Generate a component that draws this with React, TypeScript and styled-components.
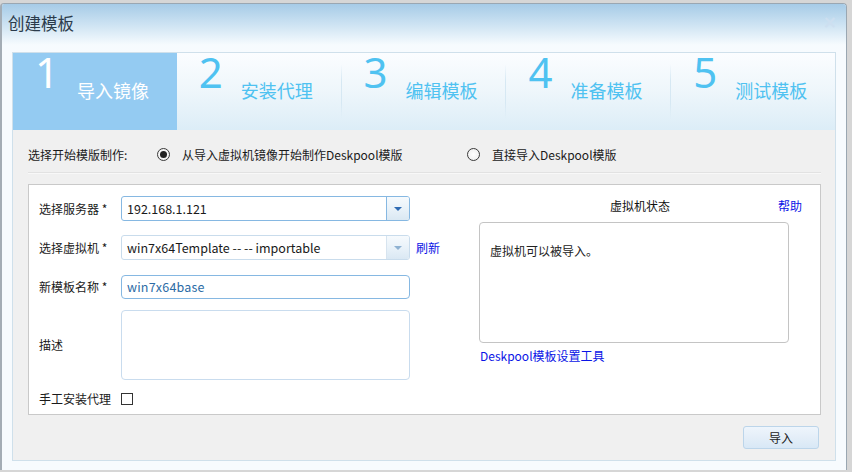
import React from "react";
import styled, { createGlobalStyle } from "styled-components";

const Global = createGlobalStyle`
  html, body { margin: 0; padding: 0; }
  body {
    background: #d6d6d6;
    font-family: "Noto Sans CJK SC", "Noto Sans", sans-serif;
    font-size: 12px;
    color: #1a1a1a;
    width: 852px;
    height: 472px;
    overflow: hidden;
  }
`;

const Window = styled.div`
  margin: 3px 3px 0 0;
  width: 847px;
  height: 467px;
  border: 1px solid #9aa7b2;
  border-left: 2px solid #a4adb5;
  border-bottom: none;
  border-radius: 4px 4px 0 0;
  background: #f7fbfe;
  display: flex;
  flex-direction: column;
  overflow: hidden;
  box-sizing: border-box;
`;

const TitleBar = styled.div`
  height: 48px;
  flex: none;
  display: flex;
  align-items: flex-start;
  justify-content: space-between;
  padding: 8px 9px 0 6px;
  box-sizing: border-box;
  background: linear-gradient(to bottom, #a6cbe7 0%, #cfe4f3 45%, #f6fbfe 85%, #f7fbfe 100%);
`;

const Title = styled.div`
  font-size: 16.5px;
  line-height: 22px;
  color: #2b3b4b;
`;

const Close = styled.div`
  font-family: "DejaVu Sans", sans-serif;
  font-weight: bold;
  font-size: 17px;
  line-height: 17px;
  color: #cddff0;
  margin-top: 2px;
`;

const Content = styled.div`
  margin: 0 10px 0 10px;
  height: 409px;
  border: 1px solid #cfe0eb;
  background: #f0f0f0;
  display: flex;
  flex-direction: column;
  box-sizing: border-box;
`;

const StepBar = styled.div`
  height: 77px;
  flex: none;
  display: flex;
  align-items: stretch;
  background: linear-gradient(to bottom, #fbfdff 0%, #eef6fb 50%, #dcedf7 100%);
`;

const Step = styled.div<{ $active?: boolean }>`
  flex: 1;
  display: flex;
  align-items: flex-start;
  padding-left: 22px;
  background: ${(p) => (p.$active ? "#94cbf2" : "transparent")};
  color: ${(p) => (p.$active ? "#ffffff" : "#4fc2f1")};
`;

const StepNum = styled.div`
  width: 42px;
  font-family: "Noto Sans", sans-serif;
  font-size: 42px;
  line-height: 36px;
  margin-top: 1px;
`;

const StepLabel = styled.div`
  font-size: 18px;
  line-height: 18px;
  margin-top: 28px;
`;

const StepSep = styled.div`
  width: 1px;
  align-self: center;
  height: 56px;
  background: linear-gradient(to bottom, rgba(255,255,255,0), #d6e8f3 30%, #d6e8f3 70%, rgba(255,255,255,0));
`;

const Body = styled.div`
  flex: 1;
  display: flex;
  flex-direction: column;
  padding: 0 14px 0 15px;
`;

const ModeRow = styled.div`
  height: 43px;
  display: flex;
  align-items: center;
  padding-top: 6px;
  box-sizing: border-box;
  border-bottom: 1px solid #e2e2e2;
  box-shadow: 0 1px 0 #f8f8f8;
`;

const ModeLabel = styled.span`
  width: 129px;
`;

const RadioOption = styled.label<{ $w?: number }>`
  display: flex;
  align-items: center;
  gap: 12px;
  width: ${(p) => (p.$w ? `${p.$w}px` : "auto")};
`;

const RadioDot = styled.span<{ $checked?: boolean }>`
  width: 13px;
  height: 13px;
  border-radius: 50%;
  box-sizing: border-box;
  border: 1px solid #3a3a3a;
  background: radial-gradient(circle, #ffffff 0%, #ececec 100%);
  display: flex;
  align-items: center;
  justify-content: center;
  &::after {
    content: "";
    width: 7px;
    height: 7px;
    border-radius: 50%;
    background: ${(p) => (p.$checked ? "#222" : "transparent")};
  }
`;

const Panel = styled.div`
  margin-top: 11px;
  height: 231px;
  border: 1px solid #c9c9c9;
  background: #ffffff;
  display: flex;
  box-sizing: border-box;
`;

const Form = styled.div`
  width: 450px;
  padding: 11px 0 0 10px;
  box-sizing: border-box;
  display: flex;
  flex-direction: column;
`;

const FieldRow = styled.div<{ $mt?: number }>`
  display: grid;
  grid-template-columns: 82px 289px auto;
  align-items: center;
  margin-top: ${(p) => p.$mt ?? 0}px;
`;

const Label = styled.div`
  line-height: 16px;
  white-space: nowrap;
`;

const Combo = styled.div<{ $focus?: boolean }>`
  height: 25px;
  display: flex;
  border: 1px solid ${(p) => (p.$focus ? "#86b8e2" : "#c9dcec")};
  border-radius: 3px;
  box-sizing: border-box;
  overflow: hidden;
  background: #fff;
`;

const ComboText = styled.div`
  flex: 1;
  padding-left: 5px;
  line-height: 23px;
  font-size: 12.5px;
  color: #1a1a1a;
`;

const ComboBtn = styled.div<{ $focus?: boolean }>`
  width: 22px;
  border-left: 1px solid ${(p) => (p.$focus ? "#86b8e2" : "#d7e4ef")};
  background: linear-gradient(to bottom, #f6fafd 0%, #e9f2f9 50%, #dae8f3 100%);
  display: flex;
  align-items: center;
  justify-content: center;
  &::after {
    content: "";
    width: 0;
    height: 0;
    border-left: 4px solid transparent;
    border-right: 4px solid transparent;
    border-top: 4px solid ${(p) => (p.$focus ? "#2f6bb3" : "#8fb2d2")};
  }
`;

const TextInput = styled.div`
  height: 24px;
  border: 1px solid #86b8e2;
  border-radius: 4px;
  box-sizing: border-box;
  padding-left: 5px;
  line-height: 21px;
  font-size: 12.5px;
  color: #2c6ca6;
  background: #fff;
  letter-spacing: 0.2px;
`;

const TextArea = styled.div`
  height: 70px;
  border: 1px solid #c9dcee;
  border-radius: 4px;
  box-sizing: border-box;
  background: #fff;
`;

const Link = styled.a`
  color: #0a14e6;
  text-decoration: none;
  line-height: 16px;
  cursor: pointer;
`;

const RefreshLink = styled(Link)`
  margin-left: 6px;
`;

const Check = styled.span`
  width: 12px;
  height: 12px;
  border: 1px solid #333;
  box-sizing: border-box;
  background: #fff;
  display: block;
`;

const StatusCol = styled.div`
  width: 323px;
  padding-top: 12px;
  display: flex;
  flex-direction: column;
  align-items: flex-start;
`;

const StatusHead = styled.div`
  width: 100%;
  display: flex;
  align-items: center;
  height: 17px;
`;

const StatusTitle = styled.div`
  margin-left: 131px;
  color: #111;
`;

const HelpLink = styled(Link)`
  margin-left: auto;
`;

const StatusBox = styled.div`
  margin-top: 8px;
  width: 310px;
  height: 121px;
  border: 1px solid #c4c4c4;
  border-radius: 4px;
  box-sizing: border-box;
  padding: 20px 10px;
  line-height: 16px;
  color: #222;
`;

const ToolLink = styled(Link)`
  margin-top: 5px;
  margin-left: 1px;
`;

const Footer = styled.div`
  display: flex;
  justify-content: flex-end;
  padding: 11px 2px 0 0;
`;

const Button = styled.button`
  width: 76px;
  height: 23px;
  border: 1px solid #bcd5ea;
  border-radius: 3px;
  background: linear-gradient(to bottom, #eef5fc 0%, #e4eef8 50%, #d8e8f6 100%);
  font-family: "Noto Sans CJK SC", sans-serif;
  font-size: 12px;
  color: #1a1a1a;
  padding: 0;
  line-height: 20px;
`;

const steps = ["导入镜像", "安装代理", "编辑模板", "准备模板", "测试模板"];

export default function App() {
  return (
    <>
      <Global />
      <Window>
        <TitleBar>
          <Title>创建模板</Title>
          <Close>×</Close>
        </TitleBar>
        <Content>
          <StepBar>
            {steps.map((s, i) => (
              <React.Fragment key={s}>
                {i >= 2 && <StepSep />}
                <Step $active={i === 0}>
                  <StepNum>{i + 1}</StepNum>
                  <StepLabel>{s}</StepLabel>
                </Step>
              </React.Fragment>
            ))}
          </StepBar>
          <Body>
            <ModeRow>
              <ModeLabel>选择开始模版制作:</ModeLabel>
              <RadioOption $w={310}>
                <RadioDot $checked />
                从导入虚拟机镜像开始制作Deskpool模版
              </RadioOption>
              <RadioOption>
                <RadioDot />
                直接导入Deskpool模版
              </RadioOption>
            </ModeRow>
            <Panel>
              <Form>
                <FieldRow>
                  <Label>选择服务器 *</Label>
                  <Combo $focus>
                    <ComboText>192.168.1.121</ComboText>
                    <ComboBtn $focus />
                  </Combo>
                </FieldRow>
                <FieldRow $mt={14}>
                  <Label>选择虚拟机 *</Label>
                  <Combo>
                    <ComboText>win7x64Template -- -- importable</ComboText>
                    <ComboBtn />
                  </Combo>
                  <RefreshLink>刷新</RefreshLink>
                </FieldRow>
                <FieldRow $mt={15}>
                  <Label>新模板名称 *</Label>
                  <TextInput>win7x64base</TextInput>
                </FieldRow>
                <FieldRow $mt={11}>
                  <Label>描述</Label>
                  <TextArea />
                </FieldRow>
                <FieldRow $mt={11}>
                  <Label>手工安装代理</Label>
                  <Check />
                </FieldRow>
              </Form>
              <StatusCol>
                <StatusHead>
                  <StatusTitle>虚拟机状态</StatusTitle>
                  <HelpLink>帮助</HelpLink>
                </StatusHead>
                <StatusBox>虚拟机可以被导入。</StatusBox>
                <ToolLink>Deskpool模板设置工具</ToolLink>
              </StatusCol>
            </Panel>
            <Footer>
              <Button>导入</Button>
            </Footer>
          </Body>
        </Content>
      </Window>
    </>
  );
}
